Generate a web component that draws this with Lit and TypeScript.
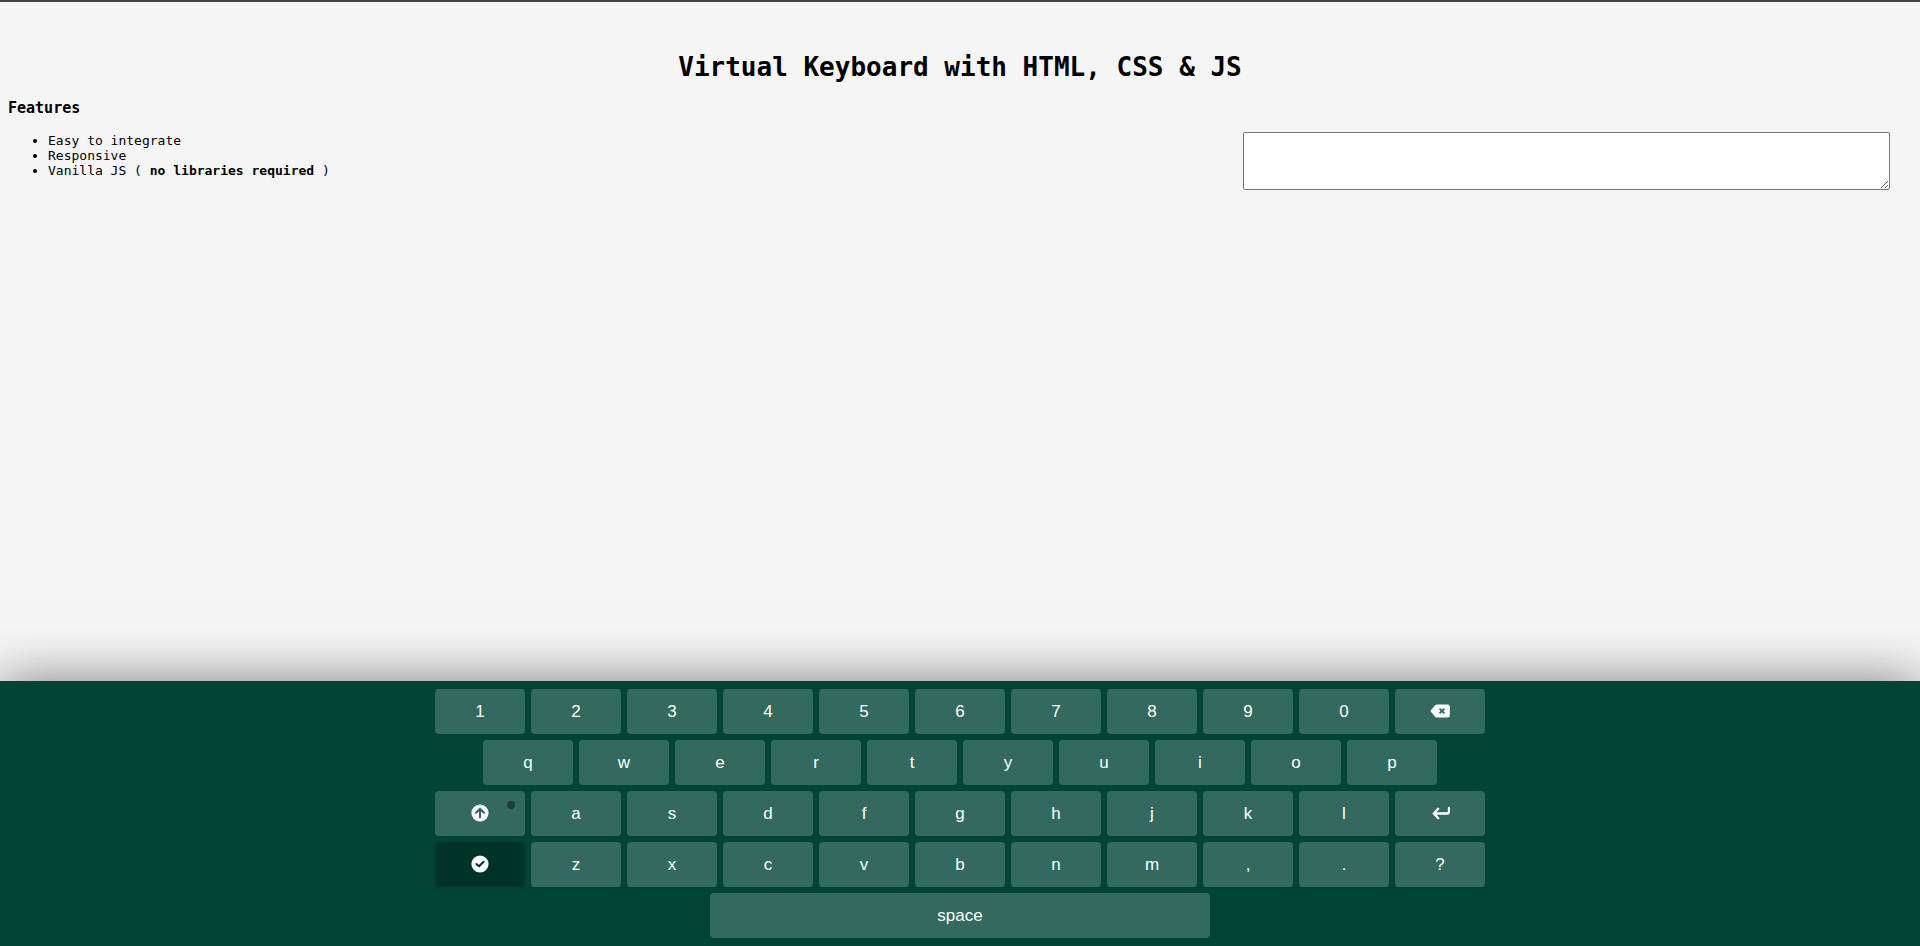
import { LitElement, html, css, svg } from "lit";
import { customElement, state, query } from "lit/decorators.js";
import { classMap } from "lit/directives/class-map.js";

const ROWS: string[][] = [
  ["1", "2", "3", "4", "5", "6", "7", "8", "9", "0", "backspace"],
  ["q", "w", "e", "r", "t", "y", "u", "i", "o", "p"],
  ["caps", "a", "s", "d", "f", "g", "h", "j", "k", "l", "enter"],
  ["done", "z", "x", "c", "v", "b", "n", "m", ",", ".", "?"],
  ["space"],
];

const ICONS: Record<string, unknown> = {
  backspace: svg`<path fill-rule="evenodd" fill="currentColor" d="M.3 10 5.2 4.3Q5.9 3.6 6.9 3.6H17.6Q19.8 3.6 19.8 5.8V14.2Q19.8 16.4 17.6 16.4H6.9Q5.9 16.4 5.2 15.7ZM8.9 8.3 10.6 10 8.9 11.7 10.2 13 12 11.3 13.8 13 15.1 11.7 13.4 10 15.1 8.3 13.8 7 12 8.7 10.2 7Z"/>`,
  caps: svg`<circle cx="10" cy="10" r="8.6" fill="currentColor"/><path class="cut" d="M10 14.6V6.2M6 9.7 10 5.7 14 9.7"/>`,
  enter: svg`<path class="stroke" d="M19 5V8.6Q19 10.5 17.1 10.5H4M8.2 5.8 3.7 10.5 8.2 15.2"/>`,
  done: svg`<circle cx="10" cy="10" r="8.6" fill="currentColor"/><path class="cut" d="M6.4 10 9 12.3 13.6 7.8"/>`,
};

@customElement("virtual-keyboard")
export class VirtualKeyboard extends LitElement {
  @state() private caps = false;

  static styles = css`
    :host {
      display: flex;
      flex-direction: column;
      gap: 6px;
      padding: 8px 0;
      background: #004436;
      box-shadow: 0 0 50px rgba(0, 0, 0, 0.5);
      user-select: none;
    }
    .row {
      display: flex;
      justify-content: center;
      gap: 6px;
    }
    .key {
      position: relative;
      display: flex;
      align-items: center;
      justify-content: center;
      width: 6%;
      max-width: 90px;
      height: 45px;
      padding: 0;
      border: none;
      border-radius: 4px;
      outline: none;
      background: rgba(255, 255, 255, 0.2);
      color: #fff;
      font: 17px "Liberation Sans", Arial, sans-serif;
      cursor: pointer;
    }
    .key:active {
      background: rgba(255, 255, 255, 0.12);
    }
    .wide {
      width: 40%;
      max-width: 500px;
    }
    .dark {
      background: rgba(0, 0, 0, 0.25);
    }
    .toggle::after {
      content: "";
      position: absolute;
      top: 10px;
      right: 10px;
      width: 8px;
      height: 8px;
      border-radius: 50%;
      background: rgba(0, 0, 0, 0.4);
    }
    .toggle.on::after {
      background: #08ff00;
    }
    .icon {
      width: 20px;
      height: 20px;
      margin-bottom: 2px;
    }
    .stroke,
    .cut {
      fill: none;
      stroke: currentColor;
      stroke-width: 2;
      stroke-linecap: round;
      stroke-linejoin: round;
    }
    .stroke {
      stroke-width: 2.3;
    }
    .cut {
      stroke: #33695e;
    }
    .dark .cut {
      stroke: #003329;
    }
  `;

  private press(key: string) {
    if (key === "caps") {
      this.caps = !this.caps;
      return;
    }
    const value = this.caps && key.length === 1 ? key.toUpperCase() : key;
    this.dispatchEvent(new CustomEvent("key", { detail: value }));
  }

  render() {
    return ROWS.map(
      (row) => html`<div class="row">
        ${row.map(
          (key) => html`<button
            type="button"
            class=${classMap({
              key: true,
              wide: key === "space",
              dark: key === "done",
              toggle: key === "caps",
              on: key === "caps" && this.caps,
            })}
            aria-label=${key}
            @click=${() => this.press(key)}
          >${ICONS[key]
            ? html`<svg class="icon" viewBox="0 0 20 20" aria-hidden="true">${ICONS[key]}</svg>`
            : this.caps && key.length === 1
              ? key.toUpperCase()
              : key}</button>`
        )}
      </div>`
    );
  }
}

@customElement("app-root")
export class AppRoot extends LitElement {
  @query("textarea") private field!: HTMLTextAreaElement;
  @state() private open = true;

  static styles = css`
    :host {
      display: flex;
      flex-direction: column;
      box-sizing: border-box;
      min-height: 100vh;
      border-top: 2px solid #444;
      background: #f5f5f5;
      color: #000;
      font: 13px/15px "DejaVu Sans Mono", monospace;
    }
    .page {
      padding: 50px 8px 16px;
    }
    .title {
      margin: 0 0 17px;
      font-size: 26px;
      line-height: 30px;
      text-align: center;
    }
    .subtitle {
      margin: 0 0 15px;
      font-size: 15px;
      line-height: 18px;
    }
    .content {
      display: flex;
      align-items: flex-start;
      justify-content: space-between;
      padding-right: 22px;
    }
    .features {
      margin: 0;
      padding: 1px 0 0 40px;
    }
    .field {
      box-sizing: border-box;
      width: 34.4%;
      height: 58px;
      margin: 0;
      padding: 2px;
      border: 1px solid #767676;
      border-radius: 2px;
      background: #fff;
      font: 13px "DejaVu Sans Mono", monospace;
    }
    .keyboard {
      margin-top: auto;
    }
  `;

  private onKey(e: CustomEvent<string>) {
    const field = this.field;
    if (e.detail === "done") this.open = false;
    else if (e.detail === "backspace") field.value = field.value.slice(0, -1);
    else if (e.detail === "enter") field.value += "\n";
    else field.value += e.detail === "space" ? " " : e.detail;
  }

  render() {
    return html`
      <main class="page">
        <h1 class="title">Virtual Keyboard with HTML, CSS &amp; JS</h1>
        <h3 class="subtitle">Features</h3>
        <div class="content">
          <ul class="features">
            <li>Easy to integrate</li>
            <li>Responsive</li>
            <li>Vanilla JS ( <b>no libraries required</b> )</li>
          </ul>
          <textarea
            class="field"
            aria-label="Text"
            @focus=${() => (this.open = true)}
          ></textarea>
        </div>
      </main>
      ${this.open
        ? html`<virtual-keyboard class="keyboard" @key=${this.onKey}></virtual-keyboard>`
        : null}
    `;
  }
}
